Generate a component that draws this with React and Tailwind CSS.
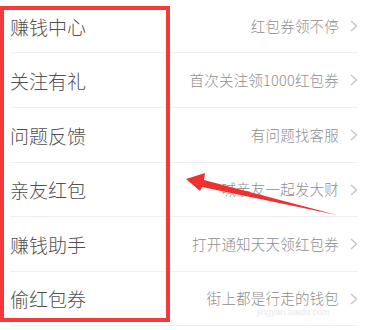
import React from "react";

const rows = [
  { l: "赚钱中心", r: "红包券领不停", h: "h-[53px]" },
  { l: "关注有礼", r: "首次关注领1000红包券", h: "h-[55px]" },
  { l: "问题反馈", r: "有问题找客服", h: "h-[55px]" },
  { l: "亲友红包", r: "喊亲友一起发大财", h: "h-[54px]" },
  { l: "赚钱助手", r: "打开通知天天领红包券", h: "h-[55px]" },
  { l: "偷红包券", r: "街上都是行走的钱包", h: "h-[54px]" },
];

function Chevron() {
  return (
    <svg width="8" height="12" viewBox="0 0 8 12" className="shrink-0">
      <path d="M1 1 L6.5 6 L1 11" fill="none" stroke="#c4c4c4" strokeWidth="1.3" />
    </svg>
  );
}

export default function App() {
  return (
    <div
      className="relative w-[370px] h-[330px] bg-white overflow-hidden"
      style={{ fontFamily: '"Noto Sans CJK SC", "Noto Sans", sans-serif' }}
    >
      <div className="flex flex-col">
        {rows.map((row, i) => (
          <div
            key={i}
            className={`${row.h} ml-[10px] mr-[12px] flex items-center justify-between border-b border-[#efefef]`}
          >
            <span className="text-[19px] leading-none font-light text-[#505050]">{row.l}</span>
            <div className="flex items-center gap-[11px]">
              <span className="text-[14.5px] leading-none font-light text-[#8e8e8e] tracking-[0.2px]">{row.r}</span>
              <Chevron />
            </div>
          </div>
        ))}
      </div>

      <div className="absolute left-0 top-[6px] w-[170px] h-[316px] border-[4px] border-[#f23a3a]" />

      <svg className="absolute left-0 top-0" width="370" height="330" viewBox="0 0 370 330">
        <polygon
          points="186,179 205,173 204,180 337,215 202,187 200,191"
          fill="#f0302f"
        />
      </svg>

      <div
        className="absolute left-[257px] top-[308px] text-[9px] leading-none text-[#e8e8e8]"
        style={{ fontFamily: '"Liberation Sans", sans-serif' }}
      >
        jingyan.baidu.com
      </div>
    </div>
  );
}
